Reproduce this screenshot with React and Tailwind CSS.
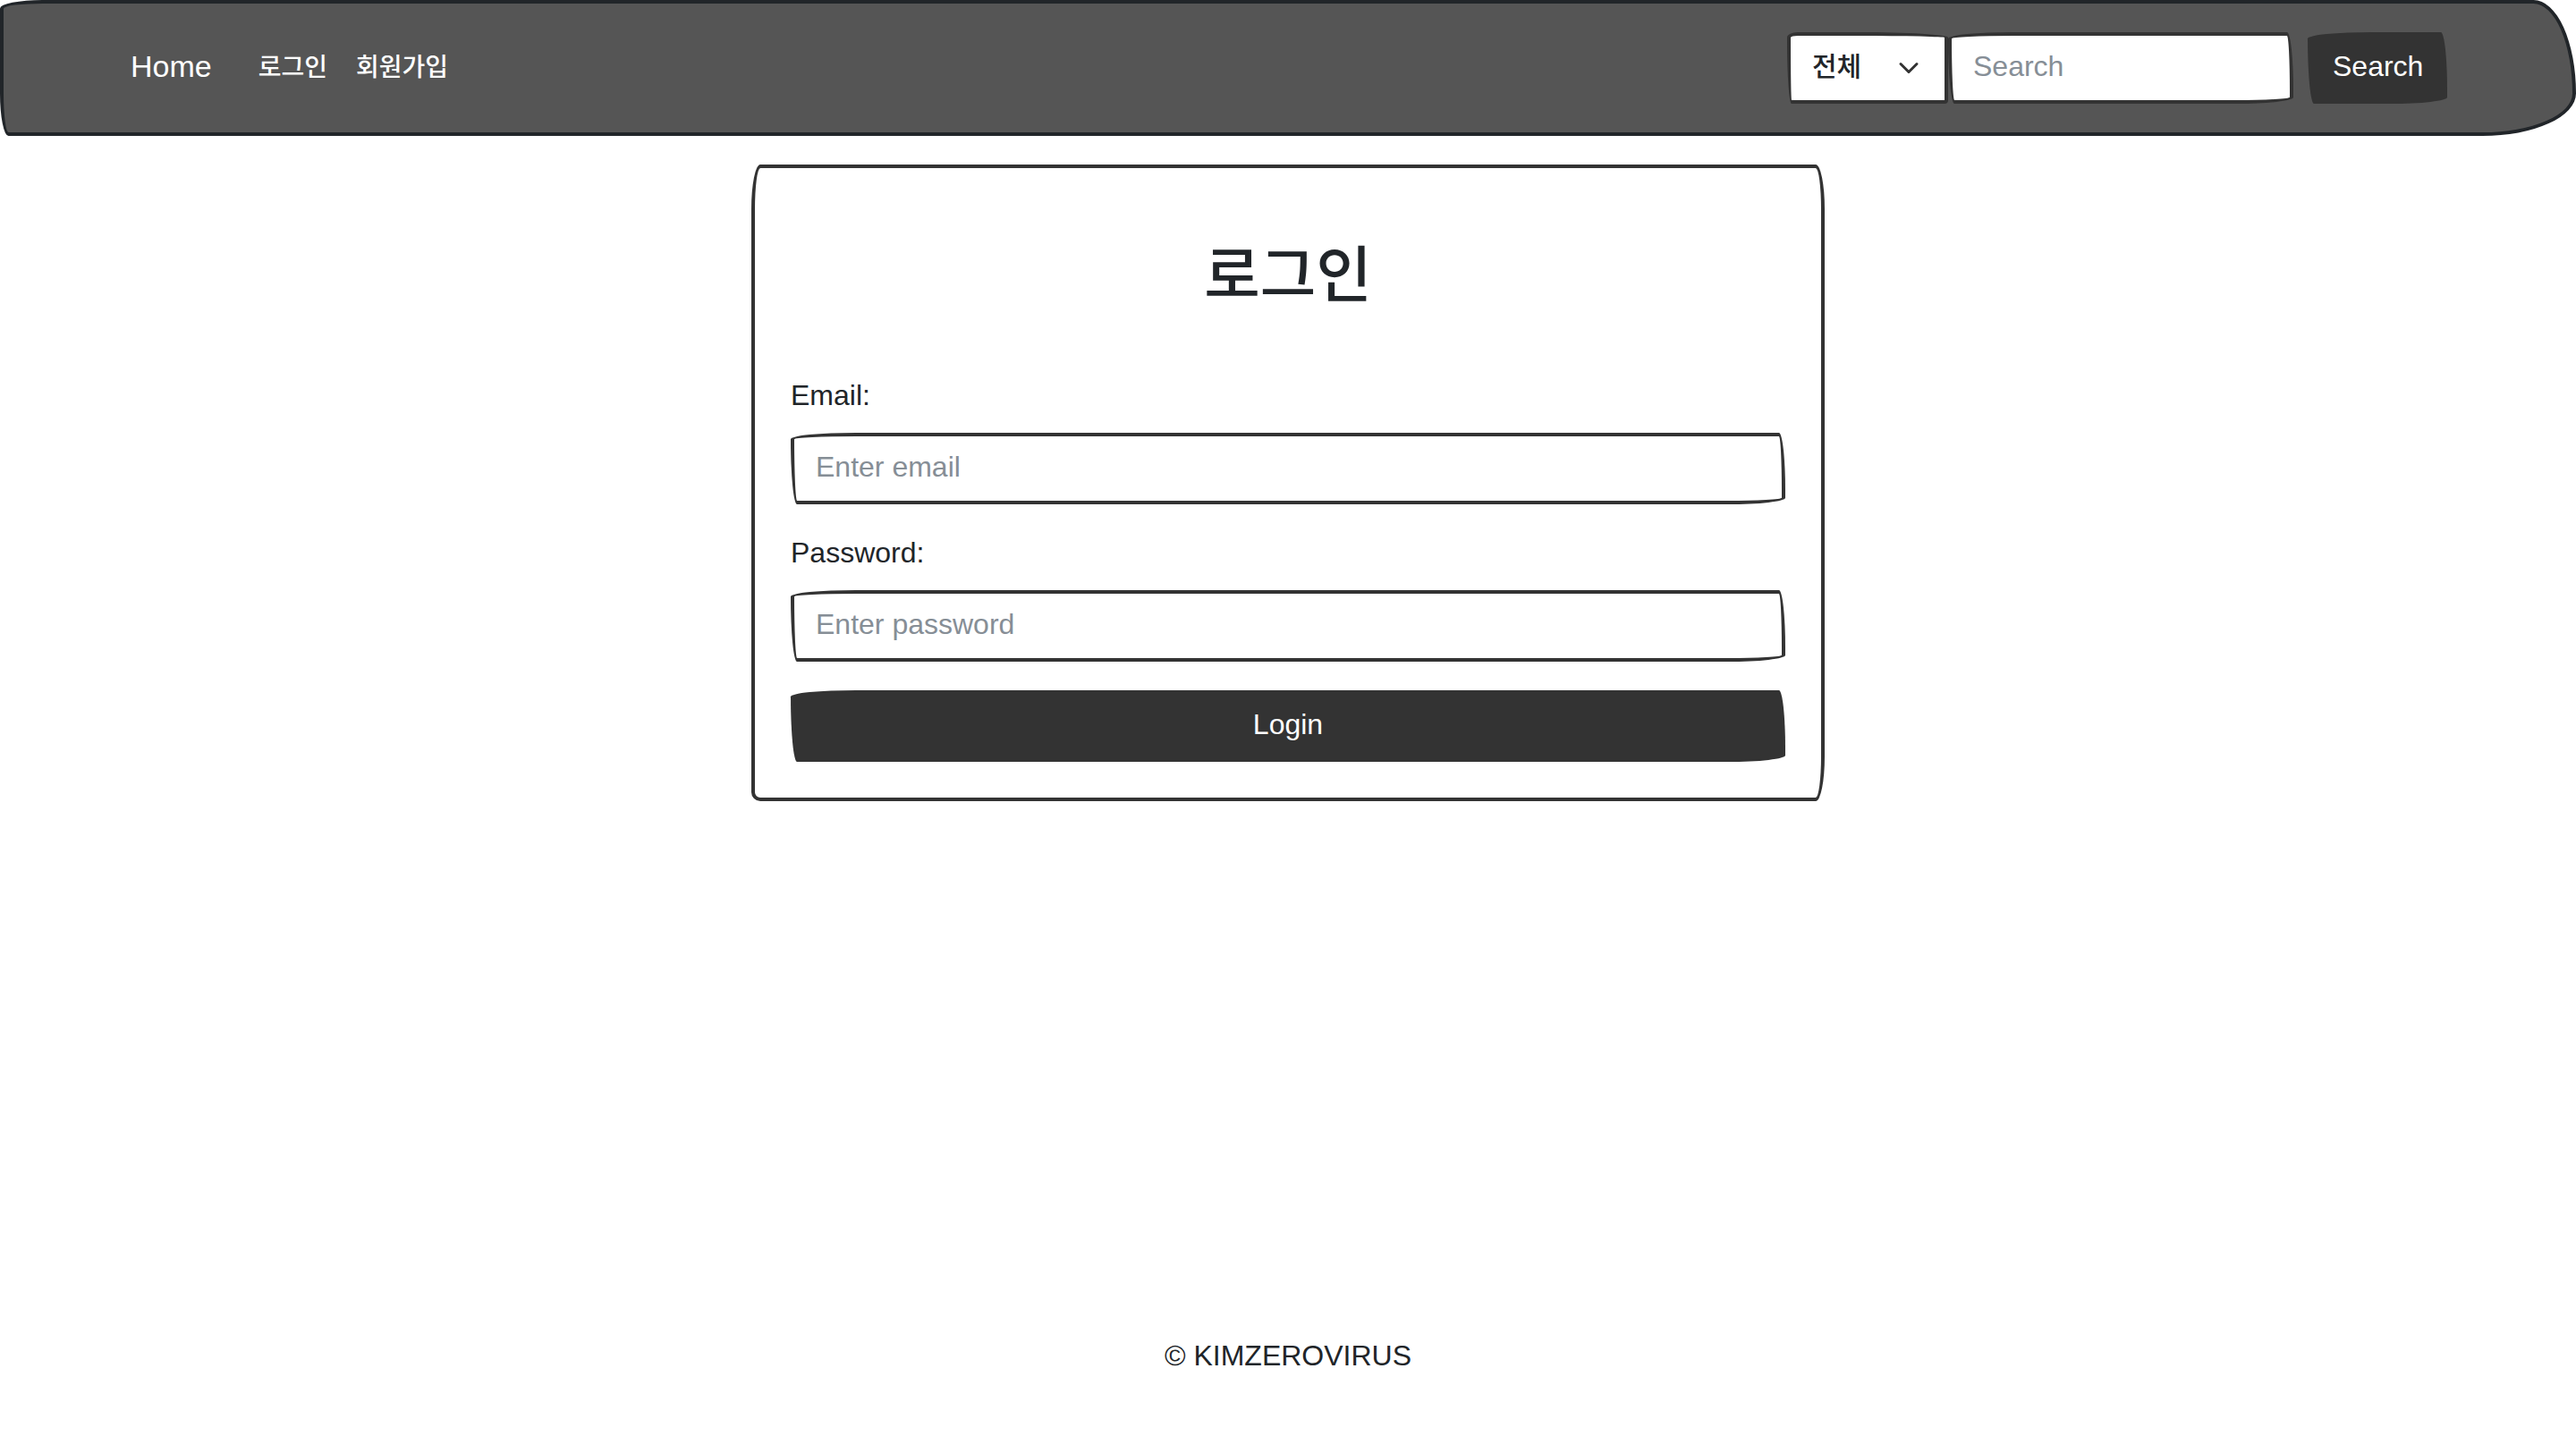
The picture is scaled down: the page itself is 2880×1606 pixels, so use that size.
import React from "react";

const sketch = "rounded-[510px_50px_450px_50px/50px_450px_50px_510px]";
const field = sketch + " h-20 border-4 border-[#333] bg-white px-6 pb-1 text-[32px] leading-12 text-[#212529] outline-none placeholder:text-[#868e96]";
const button = sketch + " h-20 bg-[#333] px-7 pb-1 text-[32px] leading-12 text-white";

function NavBar() {
  return (
    <nav className="flex items-center justify-between rounded-[50px_50px_110px_10px/10px_110px_50px_50px] border-4 border-[#212529] bg-[#555] py-8 pr-[140px] pl-[142px] text-white">
      <div className="flex items-center gap-8">
        <a href="#home" className="mr-5 pb-1 text-[34px] leading-15">Home</a>
        <a href="#login" className="text-[28px] leading-12 font-medium">로그인</a>
        <a href="#join" className="text-[28px] leading-12 font-medium">회원가입</a>
      </div>
      <form className="flex items-center">
        <div className="relative">
          <select
            aria-label="검색 범위"
            className="h-20 w-[180px] appearance-none rounded-[12px_100px_4px_5px/6px_6px_4px_70px] border-4 border-[#333] bg-white px-6 pb-1 text-[30px] font-medium text-[#212529]"
          >
            <option>전체</option>
          </select>
          <svg
            viewBox="0 0 16 16"
            className="pointer-events-none absolute top-1/2 right-8 size-6 -translate-y-1/2"
            fill="none"
            stroke="#333"
            strokeWidth="2"
            strokeLinecap="round"
            strokeLinejoin="round"
          >
            <path d="m2 5 6 6 6-6" />
          </svg>
        </div>
        <input type="search" aria-label="Search" placeholder="Search" className={field + " w-[386px]"} />
        <button type="button" className={button + " ml-4 w-[156px]"}>Search</button>
      </form>
    </nav>
  );
}

function Field({ id, label, type, placeholder }) {
  return (
    <div className="flex flex-col items-start gap-5">
      <label htmlFor={id} className="text-[32px] leading-11">{label}</label>
      <input id={id} type={type} placeholder={placeholder} className={field + " w-full"} />
    </div>
  );
}

function LoginCard() {
  return (
    <main className="mx-auto mt-8 w-full max-w-[1200px] rounded-[10px/50px_50px_50px_10px] border-4 border-[#333] p-10">
      <h1 className="py-8 text-center text-[68px] leading-24 font-medium">로그인</h1>
      <form className="mt-8 flex flex-col gap-8">
        <Field id="email" label="Email:" type="email" placeholder="Enter email" />
        <Field id="password" label="Password:" type="password" placeholder="Enter password" />
        <button type="button" className={button + " w-full"}>Login</button>
      </form>
    </main>
  );
}

export default function App() {
  return (
    <div className="flex min-h-screen flex-col bg-white font-['Liberation_Sans','Noto_Sans_CJK_KR',sans-serif] text-[#212529]">
      <NavBar />
      <LoginCard />
      <footer className="mt-auto pb-16 text-center text-[32px] leading-13">© KIMZEROVIRUS</footer>
    </div>
  );
}
